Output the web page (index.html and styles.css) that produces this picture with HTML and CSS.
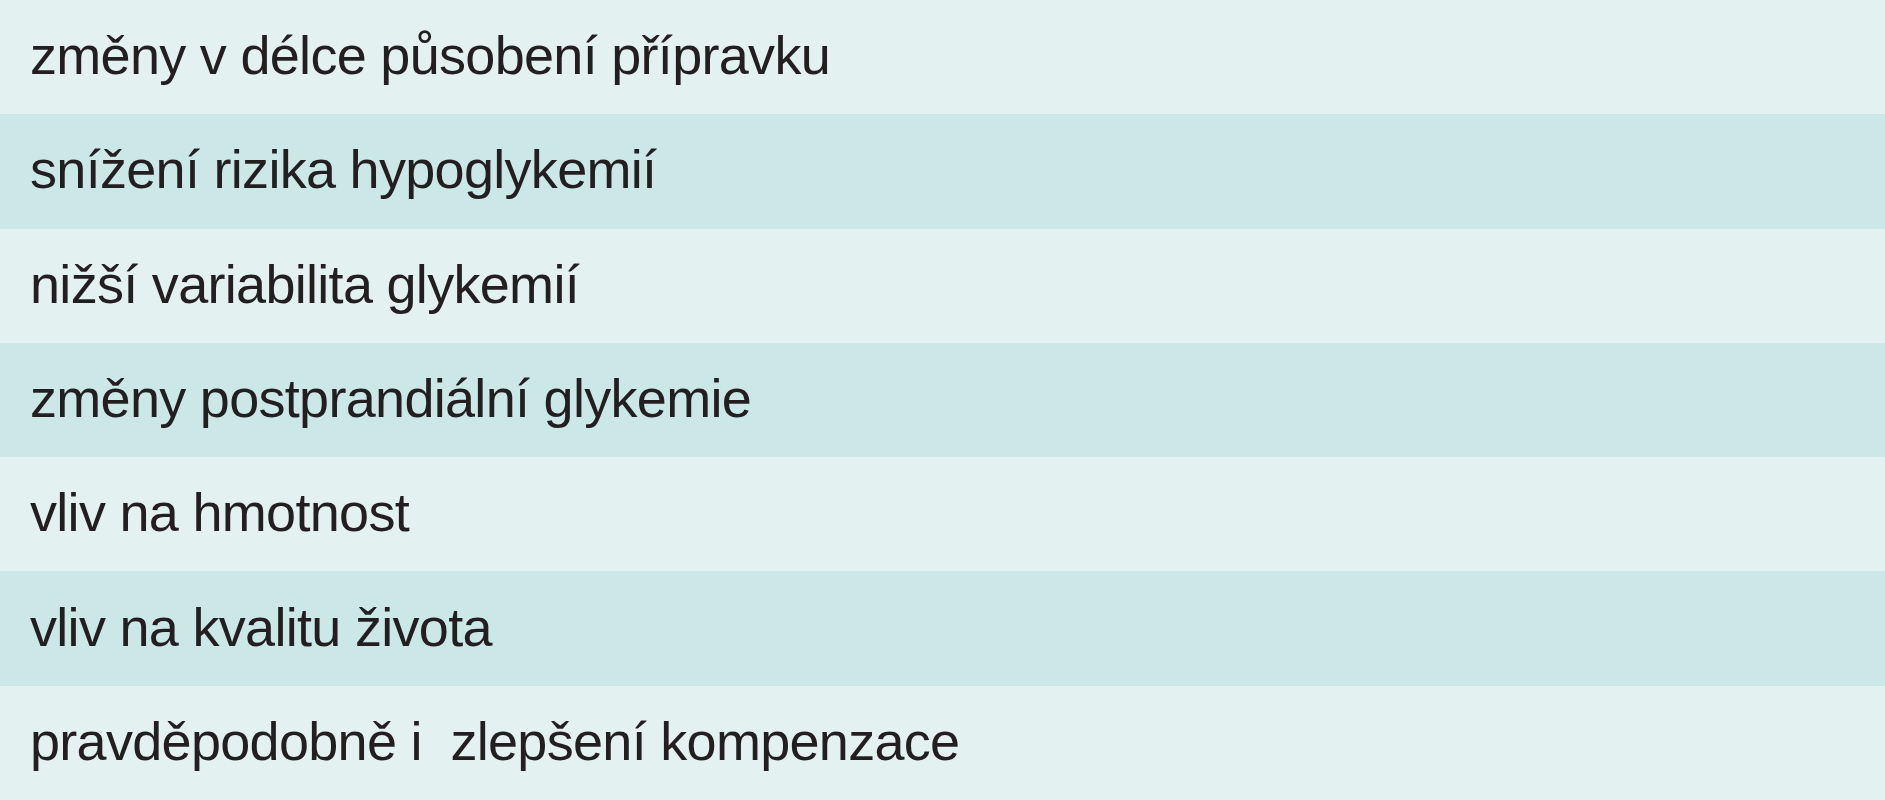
FILE: index.html
```html
<!DOCTYPE html>
<html lang="cs">
<head>
<meta charset="utf-8">
<title>Tabulka</title>
<link rel="stylesheet" href="styles.css">
</head>
<body>
<div class="table">
  <div class="row light"><span class="cell">změny v délce působení přípravku</span></div>
  <div class="row dark"><span class="cell">snížení rizika hypoglykemií</span></div>
  <div class="row light"><span class="cell">nižší variabilita glykemií</span></div>
  <div class="row dark"><span class="cell">změny postprandiální glykemie</span></div>
  <div class="row light"><span class="cell">vliv na hmotnost</span></div>
  <div class="row dark"><span class="cell">vliv na kvalitu života</span></div>
  <div class="row light"><span class="cell">pravděpodobně i&nbsp; zlepšení kompenzace</span></div>
</div>
</body>
</html>
```

FILE: styles.css
```css
html, body {
  margin: 0;
  padding: 0;
}
body {
  width: 1885px;
  height: 800px;
  overflow: hidden;
  background: #e3f2f1;
}
.table {
  display: flex;
  flex-direction: column;
  height: 800px;
}
.row {
  flex: 1 1 0;
  display: flex;
  align-items: center;
  padding: 0 0 4px 30px;
  box-sizing: border-box;
}
.light { background: #e3f2f1; }
.dark { background: #cbe8e7; }
.cell {
  font-family: "Liberation Sans", Arial, sans-serif;
  font-size: 54px;
  letter-spacing: -0.7px;
  color: #231f20;
  white-space: pre;
}
```
